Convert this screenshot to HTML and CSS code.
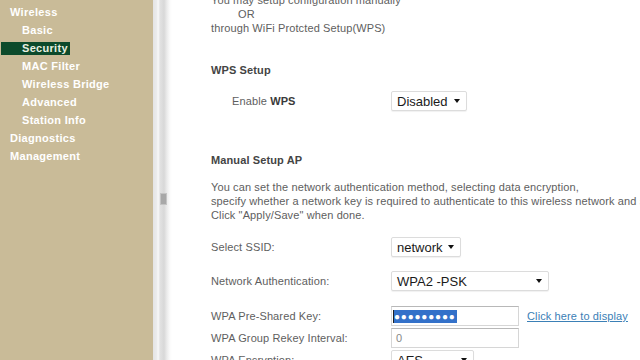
FILE: index.html
```html
<!DOCTYPE html>
<html>
<head>
<meta charset="utf-8">
<link rel="stylesheet" href="styles.css">
</head>
<body>
<div class="page">
  <nav class="side">
    <div class="item top">Wireless</div>
    <div class="item sub">Basic</div>
    <div class="item sub active"><span>Security</span></div>
    <div class="item sub">MAC Filter</div>
    <div class="item sub">Wireless Bridge</div>
    <div class="item sub">Advanced</div>
    <div class="item sub">Station Info</div>
    <div class="item top">Diagnostics</div>
    <div class="item top">Management</div>
  </nav>
  <div class="divider"><div class="grip"></div></div>
  <main class="content">
    <div class="intro">
      <div>You may setup configuration manually</div>
      <div class="or">OR</div>
      <div>through WiFi Protcted Setup(WPS)</div>
    </div>
    <h2 class="h-wps">WPS Setup</h2>
    <div class="row r-enable">
      <div class="lbl indent">Enable <b>WPS</b></div>
      <div class="sel w-dis"><span>Disabled</span><i class="arr"></i></div>
    </div>
    <h2 class="h-man">Manual Setup AP</h2>
    <p class="desc">You can set the network authentication method, selecting data encryption,<br>specify whether a network key is required to authenticate to this wireless network and specify the encryption strength.<br>Click "Apply/Save" when done.</p>
    <div class="row r-ssid">
      <div class="lbl">Select SSID:</div>
      <div class="sel w-ssid"><span>network</span><i class="arr"></i></div>
    </div>
    <div class="row r-auth">
      <div class="lbl">Network Authentication:</div>
      <div class="sel w-auth"><span>WPA2 -PSK</span><i class="arr"></i></div>
    </div>
    <div class="row r-psk">
      <div class="lbl">WPA Pre-Shared Key:</div>
      <div class="inp"><span class="caret"></span><span class="hl">●●●●●●●●●</span></div>
      <a class="link">Click here to display</a>
    </div>
    <div class="row r-rekey">
      <div class="lbl">WPA Group Rekey Interval:</div>
      <div class="inp"><span class="zero">0</span></div>
    </div>
    <div class="row r-enc">
      <div class="lbl">WPA Encryption:</div>
      <div class="sel w-enc"><span>AES</span><i class="arr"></i></div>
    </div>
  </main>
</div>
</body>
</html>
```
FILE: styles.css
```css
html, body {
  margin: 0;
  padding: 0;
  width: 640px;
  height: 360px;
  overflow: hidden;
  background: #fff;
  font-family: "Liberation Sans", Arial, sans-serif;
}
.page {
  display: flex;
  width: 640px;
  height: 360px;
}
.side {
  width: 153px;
  flex: none;
  background: #c9bb98;
  padding-top: 3px;
  box-sizing: border-box;
}
.item {
  height: 18px;
  line-height: 18px;
  color: #fff;
  font-weight: bold;
  font-size: 11px;
  letter-spacing: 0.3px;
  white-space: nowrap;
}
.item.top { padding-left: 10px; }
.item.sub { padding-left: 22px; }
.item.active {
  padding-left: 1px;
  display: flex;
  align-items: center;
}
.item.active span {
  display: block;
  width: 48px;
  height: 13px;
  line-height: 13px;
  padding-left: 21px;
  background: #0c4a2b;
  color: #e8efe0;
}
.divider {
  width: 19px;
  flex: none;
  background: linear-gradient(to right, #e4e4e4 0, #ececec 4px, #fafafa 5px, #e2e2e2 7px, #d8d8d8 11px, #ececec 14px, #fbfbfb 17px, #fff 19px);
  display: flex;
  flex-direction: column;
  align-items: center;
}
.grip {
  margin-top: 193px;
  margin-left: 2px;
  width: 5px;
  height: 10px;
  background: #a8a8a8;
  border: 1px solid #c4c4c4;
}
.content {
  flex: 1;
  padding-left: 39px;
  color: #5e5e5e;
  font-size: 11px;
  letter-spacing: 0.12px;
  white-space: nowrap;
  overflow: hidden;
}
.intro {
  margin-top: -7px;
  line-height: 14px;
}
.or { padding-left: 27px; }
h2 {
  margin: 0;
  font-size: 11px;
  font-weight: bold;
  color: #444;
  line-height: 14px;
}
.h-wps { margin-top: 28px; }
.row {
  display: flex;
  align-items: center;
}
.lbl {
  width: 180px;
  flex: none;
}
.lbl.indent { padding-left: 21px; width: 159px; }
.lbl b { color: #3a3a3a; }
.r-enable { margin-top: 14px; height: 20px; }
.h-man { margin-top: 42px; }
.desc {
  margin: 13px 0 0;
  line-height: 14px;
}
.r-ssid { margin-top: 15px; height: 20px; }
.r-auth { margin-top: 14px; height: 20px; }
.r-psk { margin-top: 15px; height: 20px; }
.r-rekey { margin-top: 2px; height: 20px; }
.r-enc { margin-top: 2px; height: 20px; }
.sel {
  box-sizing: border-box;
  height: 20px;
  border: 1px solid #dcdcdc;
  border-radius: 2px;
  background: #fff;
  box-shadow: 0 1px 1px rgba(0,0,0,0.06);
  display: flex;
  align-items: center;
  justify-content: space-between;
  padding: 0 6px 0 5px;
  color: #1a1a1a;
  font-size: 13px;
  letter-spacing: 0;
}
.arr {
  width: 0;
  height: 0;
  border-left: 3px solid transparent;
  border-right: 3px solid transparent;
  border-top: 4px solid #111;
}
.w-dis { width: 76px; }
.w-ssid { width: 70px; }
.w-auth { width: 158px; }
.w-enc { width: 83px; }
.inp {
  box-sizing: border-box;
  width: 128px;
  height: 20px;
  border: 1px solid #d6d6d6;
  border-top-color: #b8b8b8;
  display: flex;
  align-items: center;
  padding-left: 1px;
  font-size: 11px;
}
.caret {
  width: 1px;
  height: 13px;
  background: #222;
}
.hl {
  background: #3371c9;
  color: #fff;
  font-size: 10px;
  line-height: 13px;
  height: 13px;
  letter-spacing: 0.8px;
  padding-right: 1px;
}
.zero { color: #888; padding-left: 3px; }
.link {
  margin-left: 8px;
  color: #3b80b6;
  text-decoration: underline;
  font-size: 11px;
}
```
